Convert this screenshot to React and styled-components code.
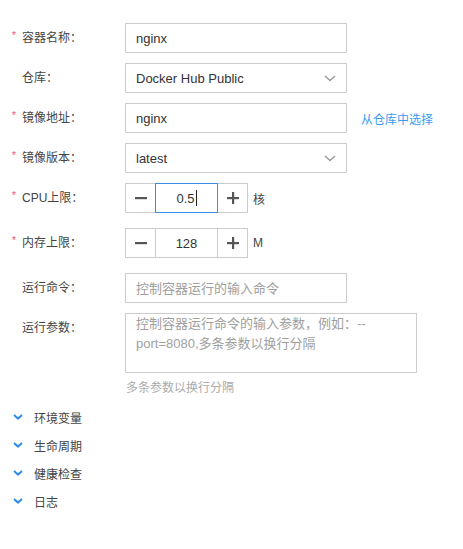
import React from 'react';
import styled, { createGlobalStyle } from 'styled-components';

const GlobalStyle = createGlobalStyle`
  body {
    margin: 0;
    background: #ffffff;
    font-family: 'Liberation Sans', 'Noto Sans CJK SC', sans-serif;
    color: #333333;
  }
`;

const Page = styled.div`
  padding: 23px 0 0 0;
  width: 463px;
`;

const Row = styled.div`
  display: flex;
  align-items: flex-start;
  margin-bottom: ${(p) => p.$gap ?? 10}px;
`;

const Label = styled.div`
  width: 125px;
  flex: none;
  display: flex;
  height: 30px;
  line-height: 30px;
  font-size: 12px;
  color: #444444;
`;

const Mark = styled.span`
  width: 10px;
  margin-left: 12px;
  color: #ec4f68;
  font-size: 10px;
  line-height: 26px;
`;

const Field = styled.div`
  display: flex;
  flex-direction: column;
`;

const Inline = styled.div`
  display: flex;
  align-items: center;
  height: 30px;
`;

const TextInput = styled.input`
  box-sizing: border-box;
  width: 222px;
  height: 30px;
  border: 1px solid #cccccc;
  border-radius: 0;
  padding: 0 10px;
  font-family: inherit;
  font-size: 13px;
  color: #333333;
  outline: none;
  &::placeholder {
    color: #a0a0a0;
  }
`;

const Select = styled.div`
  box-sizing: border-box;
  width: 222px;
  height: 30px;
  border: 1px solid #cccccc;
  padding: 0 10px;
  display: flex;
  align-items: center;
  justify-content: space-between;
  font-size: 13px;
  color: #333333;
`;

const Link = styled.a`
  margin-left: 14px;
  font-size: 12px;
  color: #3a9bf0;
  text-decoration: none;
`;

const Stepper = styled.div`
  display: flex;
  height: 30px;
`;

const StepButton = styled.button`
  box-sizing: border-box;
  width: 31px;
  height: 30px;
  border: 1px solid #cccccc;
  margin: ${(p) => (p.$side === 'left' ? '0 -1px 0 0' : '0 0 0 -1px')};
  background: #ffffff;
  padding: 0;
  display: flex;
  align-items: center;
  justify-content: center;
`;

const StepValue = styled.div`
  box-sizing: border-box;
  width: 63px;
  height: 30px;
  border: 1px solid ${(p) => (p.$focused ? '#3b8ee8' : '#cccccc')};
  position: relative;
  z-index: ${(p) => (p.$focused ? 1 : 0)};
  display: flex;
  align-items: center;
  justify-content: center;
  font-size: 13px;
  color: #333333;
`;

const Caret = styled.span`
  display: inline-block;
  width: 1px;
  height: 16px;
  margin-left: 1px;
  background: #222222;
`;

const Unit = styled.span`
  margin-left: 5px;
  font-size: 12px;
  color: #444444;
`;

const TextArea = styled.textarea`
  box-sizing: border-box;
  width: 292px;
  height: 60px;
  border: 1px solid #cccccc;
  border-radius: 0;
  padding: 0 10px;
  margin: 0;
  font-family: inherit;
  font-size: 13px;
  line-height: 20px;
  resize: none;
  outline: none;
  &::placeholder {
    color: #a0a0a0;
  }
`;

const Hint = styled.div`
  margin-top: 7px;
  font-size: 12px;
  line-height: 17px;
  color: #ababab;
  padding-left: 1px;
`;

const Sections = styled.div`
  margin-top: 6px;
  display: flex;
  flex-direction: column;
`;

const Section = styled.div`
  display: flex;
  align-items: center;
  height: 28px;
  padding-left: 13px;
  font-size: 12px;
  color: #444444;
`;

const ChevronSmall = () => (
  <svg width="10" height="6" viewBox="0 0 10 6" style={{ marginRight: 11 }}>
    <path d="M1 1 L5 4.6 L9 1" fill="none" stroke="#2d8cf0" strokeWidth="2" />
  </svg>
);

const ChevronDown = () => (
  <svg width="12" height="7" viewBox="0 0 12 7">
    <path d="M1 1 L6 5.6 L11 1" fill="none" stroke="#999999" strokeWidth="1.4" />
  </svg>
);

const Minus = () => (
  <svg width="12" height="12" viewBox="0 0 12 12">
    <rect x="0" y="5" width="12" height="2.2" fill="#555555" />
  </svg>
);

const Plus = () => (
  <svg width="12" height="12" viewBox="0 0 12 12">
    <rect x="0" y="5" width="12" height="2.2" fill="#555555" />
    <rect x="5" y="0" width="2.2" height="12" fill="#555555" />
  </svg>
);

const FieldLabel = ({ required, children }) => (
  <Label>
    <Mark>{required ? '*' : ''}</Mark>
    {children}
  </Label>
);

const NumberStepper = ({ value, focused }) => (
  <Stepper>
    <StepButton $side="left">
      <Minus />
    </StepButton>
    <StepValue $focused={focused}>
      {value}
      {focused && <Caret />}
    </StepValue>
    <StepButton $side="right">
      <Plus />
    </StepButton>
  </Stepper>
);

const App = () => {
  const sections = ['环境变量', '生命周期', '健康检查', '日志'];

  return (
    <Page>
      <GlobalStyle />
      <Row>
        <FieldLabel required>容器名称：</FieldLabel>
        <TextInput defaultValue="nginx" />
      </Row>
      <Row>
        <FieldLabel>仓库：</FieldLabel>
        <Select>
          Docker Hub Public
          <ChevronDown />
        </Select>
      </Row>
      <Row>
        <FieldLabel required>镜像地址：</FieldLabel>
        <Inline>
          <TextInput defaultValue="nginx" />
          <Link href="#">从仓库中选择</Link>
        </Inline>
      </Row>
      <Row>
        <FieldLabel required>镜像版本：</FieldLabel>
        <Select>
          latest
          <ChevronDown />
        </Select>
      </Row>
      <Row $gap={15}>
        <FieldLabel required>CPU上限：</FieldLabel>
        <Inline>
          <NumberStepper value="0.5" focused />
          <Unit>核</Unit>
        </Inline>
      </Row>
      <Row $gap={15}>
        <FieldLabel required>内存上限：</FieldLabel>
        <Inline>
          <NumberStepper value="128" />
          <Unit>M</Unit>
        </Inline>
      </Row>
      <Row>
        <FieldLabel>运行命令：</FieldLabel>
        <TextInput placeholder="控制容器运行的输入命令" />
      </Row>
      <Row $gap={0}>
        <FieldLabel>运行参数：</FieldLabel>
        <Field>
          <TextArea placeholder={'控制容器运行命令的输入参数，例如：--\nport=8080,多条参数以换行分隔'} />
          <Hint>多条参数以换行分隔</Hint>
        </Field>
      </Row>
      <Sections>
        {sections.map((name) => (
          <Section key={name}>
            <ChevronSmall />
            {name}
          </Section>
        ))}
      </Sections>
    </Page>
  );
};

export default App;
